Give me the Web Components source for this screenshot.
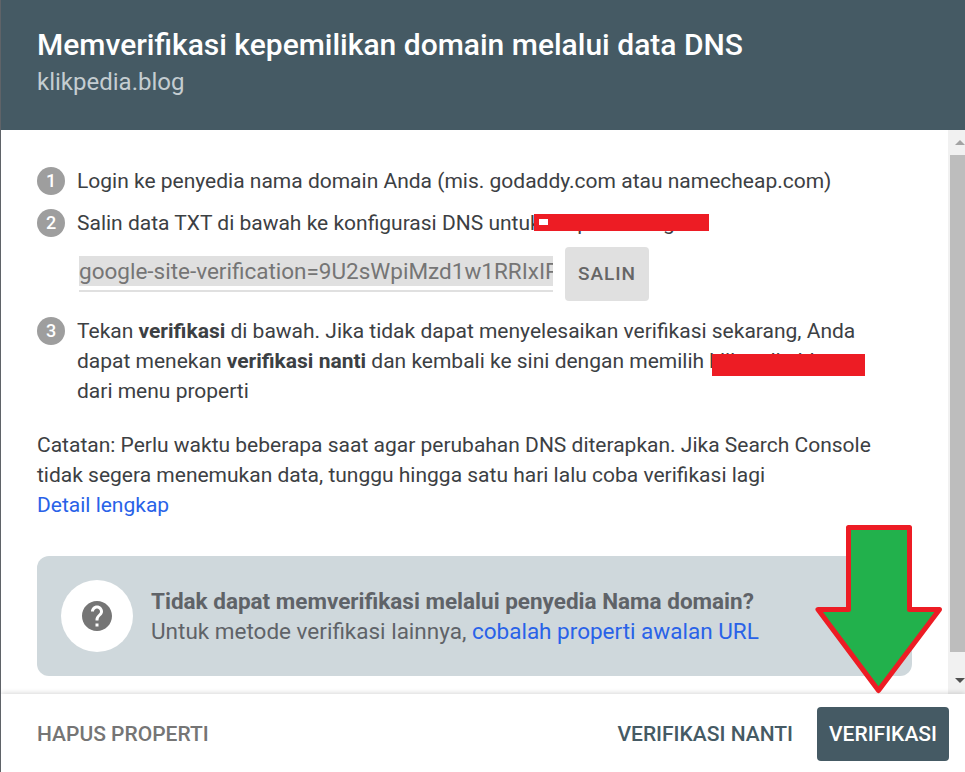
<!DOCTYPE html>
<html>
<head>
<meta charset="utf-8">
<style>
    html, body { margin: 0; padding: 0; background: #fff; }
    body { width: 965px; height: 772px; overflow: hidden; font-family: Roboto, sans-serif; }
</style>
</head>
<body>
<verify-dialog></verify-dialog>

<template id="dialog-template">
    <style>
        :host {
            display: flex;
            flex-direction: column;
            position: relative;
            width: 965px;
            height: 772px;
            box-sizing: border-box;
            border-left: 1px solid #5f6368;
            overflow: hidden;
            color: #3c4043;
        }
        :host::before {
            content: '';
            position: absolute;
            left: -1px;
            top: 0;
            width: 1px;
            height: 26px;
            background: #2b2b2b;
        }
        header {
            height: 130px;
            flex: none;
            box-sizing: border-box;
            padding: 26px 36px 0;
            background: #455a64;
        }
        h1 { margin: 0; font-size: 30px; line-height: 38px; font-weight: 500; color: #fff; }
        header p { margin: 0; padding-top: 1px; font-size: 24px; line-height: 34px; color: #c4cdd1; }
        main { flex: 1; display: flex; min-height: 0; }
        .content { flex: 1; box-sizing: border-box; padding: 36px 36px 0 36px; font-size: 21px; line-height: 30px; }
        .note { margin: 24px 0 0; }
        a { color: #2962e8; text-decoration: none; }
        footer {
            flex: none;
            height: 78px;
            box-sizing: border-box;
            padding: 13px 16px 0 36px;
            display: flex;
            align-items: flex-start;
            background: #fff;
            box-shadow: 0 -1px 5px rgba(0,0,0,.16);
            position: relative;
        }
        .spacer { flex: 1; }
    </style>
    <header>
        <h1>Memverifikasi kepemilikan domain melalui data DNS</h1>
        <p>klikpedia.blog</p>
    </header>
    <main>
        <div class="content">
            <verify-step number="1">Login ke penyedia nama domain Anda (mis. godaddy.com atau namecheap.com)</verify-step>
            <verify-step number="2" style="margin-top:12px">Salin data TXT di bawah ke konfigurasi DNS untuk klikpedia.blog</verify-step>
            <txt-record>google-site-verification=9U2sWpiMzd1w1RRIxIP</txt-record>
            <verify-step number="3"><span>Tekan <b>verifikasi</b> di bawah. Jika tidak dapat menyelesaikan verifikasi sekarang, Anda<br>dapat menekan <b>verifikasi nanti</b> dan kembali ke sini dengan memilih klikpedia.blog<br>dari menu properti</span></verify-step>
            <p class="note">Catatan: Perlu waktu beberapa saat agar perubahan DNS diterapkan. Jika Search Console<br>tidak segera menemukan data, tunggu hingga satu hari lalu coba verifikasi lagi<br><a href="#">Detail lengkap</a></p>
            <help-callout>
                <b slot="title">Tidak dapat memverifikasi melalui penyedia Nama domain?</b>
                Untuk metode verifikasi lainnya, <a href="#">cobalah properti awalan URL</a>
            </help-callout>
        </div>
        <fake-scrollbar></fake-scrollbar>
    </main>
    <footer>
        <text-button style="color:#757575">HAPUS PROPERTI</text-button>
        <div class="spacer"></div>
        <text-button style="color:#455a64;margin-right:24px">VERIFIKASI NANTI</text-button>
        <text-button kind="solid">VERIFIKASI</text-button>
    </footer>
    <red-mark dash style="left:533px;top:214px;width:175px;height:17px"></red-mark>
    <red-mark style="left:711px;top:354px;width:153px;height:22px"></red-mark>
    <arrow-mark></arrow-mark>
</template>

<script>
class VerifyDialog extends HTMLElement {
    constructor() {
        super()
        const shadowRoot = this.attachShadow({mode: 'open'})
        shadowRoot.append(document.querySelector('#dialog-template').content.cloneNode(true))
    }
}

class VerifyStep extends HTMLElement {
    constructor() {
        super()
        const shadowRoot = this.attachShadow({mode: 'open'})
        shadowRoot.innerHTML = `
            <style>
                :host { display: flex; gap: 12px; color: #3c4043; }
                .num {
                    flex: none;
                    width: 28px;
                    height: 28px;
                    margin-top: 1px;
                    border-radius: 50%;
                    background: #9e9e9e;
                    color: #fff;
                    font-size: 18px;
                    font-weight: 500;
                    line-height: 28px;
                    text-align: center;
                }
                .text { flex: 1; }
            </style>
            <div class="num">${this.getAttribute('number')}</div>
            <div class="text"><slot></slot></div>
        `
    }
}

class TxtRecord extends HTMLElement {
    constructor() {
        super()
        const shadowRoot = this.attachShadow({mode: 'open'})
        shadowRoot.innerHTML = `
            <style>
                :host { display: flex; align-items: flex-start; gap: 12px; margin: 9px 0 15px 42px; }
                .field { width: 474px; margin-top: 9px; border-bottom: 2px solid #e0e0e0; padding-bottom: 4px; }
                .value {
                    height: 30px;
                    line-height: 30px;
                    overflow: hidden;
                    white-space: nowrap;
                    background: #e0e0e0;
                    color: #757575;
                    font-size: 22.5px;
                }
                .copy {
                    width: 84px;
                    height: 54px;
                    border-radius: 4px;
                    background: #e0e0e0;
                    color: #666;
                    font-size: 19px;
                    font-weight: 500;
                    letter-spacing: 1px;
                    line-height: 54px;
                    text-align: center;
                }
            </style>
            <div class="field"><div class="value"><slot></slot></div></div>
            <div class="copy">SALIN</div>
        `
    }
}

class HelpCallout extends HTMLElement {
    constructor() {
        super()
        const shadowRoot = this.attachShadow({mode: 'open'})
        shadowRoot.innerHTML = `
            <style>
                :host {
                    display: flex;
                    align-items: center;
                    gap: 18px;
                    height: 120px;
                    box-sizing: border-box;
                    margin-top: 36px;
                    padding: 0 24px;
                    border-radius: 12px;
                    background: #cfd8dc;
                    color: #5f6368;
                    font-size: 22.5px;
                }
                .circle {
                    flex: none;
                    display: flex;
                    align-items: center;
                    justify-content: center;
                    width: 72px;
                    height: 72px;
                    border-radius: 50%;
                    background: #fff;
                }
                .title { display: block; }
                svg { display: block; }
            </style>
            <div class="circle">
                <svg width="36" height="36" viewBox="0 0 24 24" fill="#757575"><path d="M12 2C6.48 2 2 6.48 2 12s4.48 10 10 10 10-4.48 10-10S17.52 2 12 2zm1 17h-2v-2h2v2zm2.07-7.75l-.9.92C13.45 12.9 13 13.5 13 15h-2v-.5c0-1.1.45-2.1 1.17-2.83l1.24-1.26c.37-.36.59-.86.59-1.41 0-1.1-.9-2-2-2s-2 .9-2 2H8c0-2.21 1.79-4 4-4s4 1.79 4 4c0 .88-.36 1.68-.93 2.25z"/></svg>
            </div>
            <div>
                <div class="title"><slot name="title"></slot></div>
                <slot></slot>
            </div>
        `
    }
}

class FakeScrollbar extends HTMLElement {
    constructor() {
        super()
        const shadowRoot = this.attachShadow({mode: 'open'})
        shadowRoot.innerHTML = `
            <style>
                :host { display: flex; flex-direction: column; flex: none; width: 17px; background: #f1f1f1; }
                .btn { flex: none; display: flex; align-items: center; padding-left: 7px; }
                .thumb { flex: none; height: 497px; margin-left: 2px; background: #bdbdbd; }
                .track { flex: 1; }
            </style>
            <div class="btn" style="height:25px"><svg width="10" height="5"><path d="M5 0L10 5H0z" fill="#a3a3a3"/></svg></div>
            <div class="thumb"></div>
            <div class="track"></div>
            <div class="btn" style="height:28px"><svg width="10" height="5"><path d="M0 0h10L5 5z" fill="#505050"/></svg></div>
        `
    }
}

class TextButton extends HTMLElement {
    constructor() {
        super()
        const shadowRoot = this.attachShadow({mode: 'open'})
        shadowRoot.innerHTML = `
            <style>
                :host {
                    display: block;
                    height: 54px;
                    line-height: 54px;
                    font-size: 21px;
                    font-weight: 500;
                    white-space: nowrap;
                }
                :host([kind="solid"]) {
                    width: 132px;
                    border-radius: 4px;
                    background: #455a64;
                    color: #fff;
                    text-align: center;
                }
            </style>
            <slot></slot>
        `
    }
}

class RedMark extends HTMLElement {
    constructor() {
        super()
        const shadowRoot = this.attachShadow({mode: 'open'})
        shadowRoot.innerHTML = `
            <style>
                :host { display: block; position: absolute; background: #ed1c24; }
                :host([dash])::before {
                    content: '';
                    position: absolute;
                    left: 5px;
                    top: 5px;
                    width: 9px;
                    height: 6px;
                    background: #fff;
                }
            </style>
        `
    }
}

class ArrowMark extends HTMLElement {
    constructor() {
        super()
        const shadowRoot = this.attachShadow({mode: 'open'})
        shadowRoot.innerHTML = `
            <style>
                :host { display: block; position: absolute; left: 0; top: 0; width: 965px; height: 772px; pointer-events: none; }
                svg { display: block; }
            </style>
            <svg width="965" height="772">
                <path d="M847.5 527.5h61v82h30L877.5 690.5 817 609.5h30.5z" fill="#22b14c" stroke="#ed1c24" stroke-width="5" stroke-linejoin="round"/>
            </svg>
        `
    }
}

customElements.define('verify-dialog', VerifyDialog)
customElements.define('verify-step', VerifyStep)
customElements.define('txt-record', TxtRecord)
customElements.define('help-callout', HelpCallout)
customElements.define('fake-scrollbar', FakeScrollbar)
customElements.define('text-button', TextButton)
customElements.define('red-mark', RedMark)
customElements.define('arrow-mark', ArrowMark)
</script>
</body>
</html>
